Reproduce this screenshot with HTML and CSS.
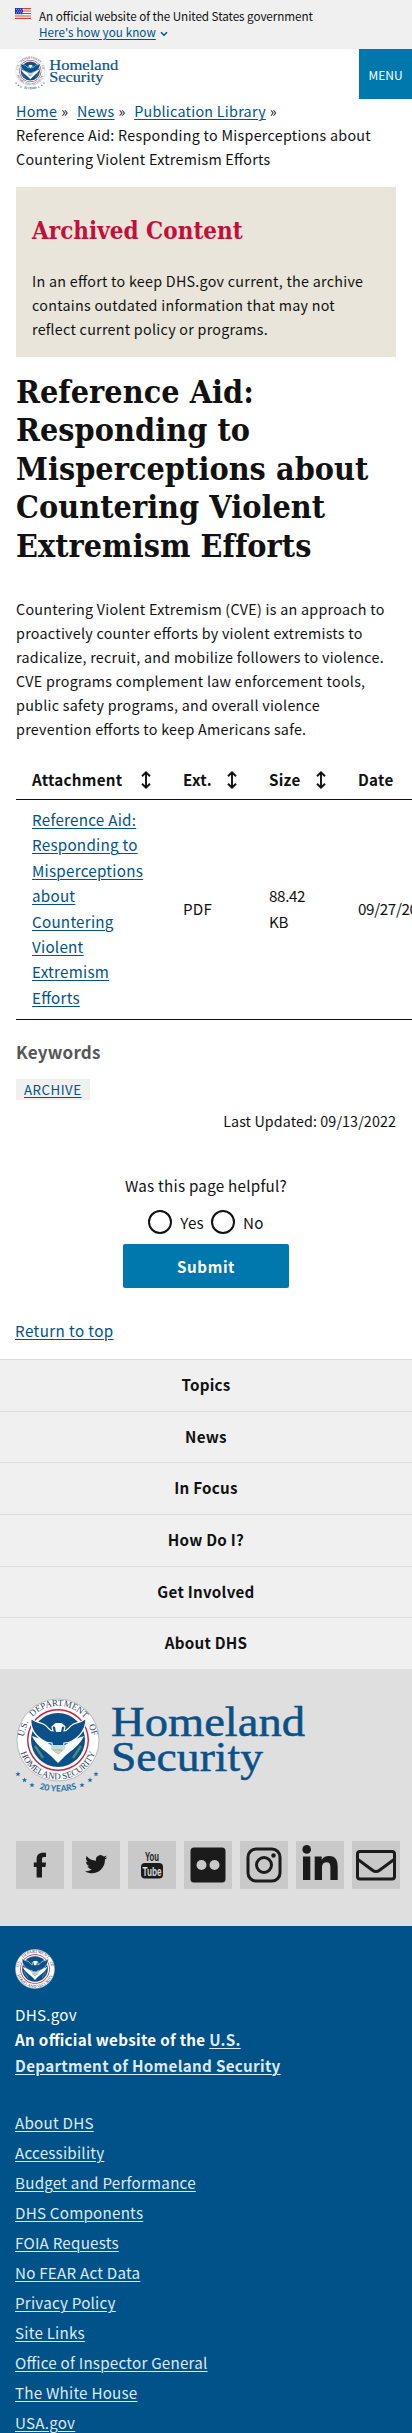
FILE: index.html
```html
<!DOCTYPE html>
<html lang="en">
<head>
<meta charset="utf-8">
<title>Reference Aid: Responding to Misperceptions about Countering Violent Extremism Efforts | Homeland Security</title>
<link rel="stylesheet" href="styles.css">
</head>
<body>
<svg class="defs" width="0" height="0" aria-hidden="true">
  <defs>
    <path id="arc-dept" d="M8.8 42 A34.2 34.2 0 0 1 77.2 42"/>
    <path id="arc-bottom" d="M3.6 42 A39.4 39.4 0 0 0 82.4 42"/>
    <path id="arc-years" d="M17 88 Q43 99 69 88"/>
    <g id="eagle">
      <circle cx="43" cy="42" r="31" fill="#c8213f"/>
      <circle cx="43" cy="42" r="29.6" fill="#fff"/>
      <circle cx="43" cy="42" r="27" fill="#0a5189"/>
      <path fill="#fff" d="M17 38c4 9 12 14 19 20l7 7 7-7c7-6 15-11 19-20l-9 3-10 6H36l-10-6z"/>
      <path fill="#0a5189" stroke="#fff" stroke-width="1.2" d="M16 20c4 5 10 4 14 7 3 2 4 6 8 6l-1-4 3-3h7l3 3-1 4c4 0 5-4 8-6 4-3 10-2 14-7 0 10-5 18-14 23-3 2-5 2-8 2l-1 8-5 4-5-4-1-8c-3 0-5 0-8-2-9-5-14-13-13-23z"/>
      <path fill="#fff" d="M38 28l3-3h5l4 3-3 1-1 5h-5l-1-5z"/>
      <path fill="#bcdcec" d="M36 47h14v4l-7 5-7-5z"/>
      <path stroke="#4d8b74" stroke-width="2.4" fill="none" d="M20 48l8 12M66 48l-8 12"/>
      <path stroke="#d9ba65" stroke-width="1.6" d="M38 52h9"/>
    </g>
    <g id="seal">
      <circle cx="43" cy="42" r="41" fill="#fff" stroke="#b7bbc0" stroke-width="1"/>
      <use href="#eagle"/>
      <g class="seal-text">
        <text><textPath href="#arc-dept" startOffset="51%" text-anchor="middle">DEPARTMENT</textPath></text>
        <text transform="rotate(-72 43 42)" x="43" y="8" text-anchor="middle">U.S.</text>
        <text transform="rotate(74 43 42)" x="43" y="8" text-anchor="middle">OF</text>
        <text><textPath href="#arc-bottom" startOffset="50%" text-anchor="middle">HOMELAND SECURITY</textPath></text>
      </g>
    </g>
    <path id="star" d="M0-2.6.7-.8 2.6-.8 1.1.4 1.7 2.3 0 1.2-1.7 2.3-1.1.4-2.6-.8-.7-.8z"/>
    <g id="stars" fill="#1c6da3">
      <use href="#star" x="3" y="76"/><use href="#star" x="9.5" y="82"/><use href="#star" x="17" y="87"/>
      <use href="#star" x="81" y="76"/><use href="#star" x="75" y="82"/><use href="#star" x="67" y="87"/>
    </g>
    <symbol id="logo" viewBox="0 0 292 98">
      <use href="#seal"/>
      <use href="#stars"/>
      <text class="years"><textPath href="#arc-years" startOffset="50%" text-anchor="middle">20 YEARS</textPath></text>
      <text class="wordmark" x="96" y="38" textLength="194" lengthAdjust="spacingAndGlyphs">Homeland</text>
      <text class="wordmark" x="96" y="73" textLength="152" lengthAdjust="spacingAndGlyphs">Security</text>
    </symbol>
    <symbol id="sort" viewBox="0 0 10 18"><path d="M5 1.5v15M1 5.2 5 1.3l4 3.9M1 12.8l4 3.9 4-3.9" fill="none" stroke="#111" stroke-width="1.9"/></symbol>
  </defs>
</svg>

<section class="banner">
  <svg class="flag" viewBox="0 0 16 11"><path fill="#fff" d="M0 0h16v11H0z"/><path stroke="#d8402f" stroke-width="1.1" d="M0 .6h16M0 3h16M0 5.5h16M0 8h16M0 10.4h16"/><path fill="#1e33b1" d="M0 0h8v6.2H0z"/><path stroke="#fff" stroke-width=".8" stroke-dasharray=".8 1.2" d="M1 1.3h7M2 3.1h6M1 4.9h7"/></svg>
  <div>
    <p class="banner-text">An official website of the United States government</p>
    <p class="banner-text know"><a class="link" href="#">Here's how you know</a><svg class="chevron" viewBox="0 0 8 6"><path d="M1 1.2l3 3 3-3" fill="none" stroke="#005288" stroke-width="1.5"/></svg></p>
  </div>
</section>

<header class="header">
  <svg class="header-logo"><use href="#logo"/></svg>
  <button class="menu">MENU</button>
</header>

<main class="main">
  <nav class="crumbs body-text">
    <a class="link" href="#">Home</a><span class="sep">»</span><a class="link" href="#">News</a><span class="sep">»</span><a class="link" href="#">Publication Library</a><span class="sep">»</span>
    <div>Reference Aid: Responding to Misperceptions about<br>Countering Violent Extremism Efforts</div>
  </nav>

  <section class="archived">
    <h2 class="archived-title">Archived Content</h2>
    <p class="body-text">In an effort to keep DHS.gov current, the archive<br>contains outdated information that may not<br>reflect current policy or programs.</p>
  </section>

  <h1 class="title">Reference Aid:<br>Responding to<br>Misperceptions about<br>Countering Violent<br>Extremism Efforts</h1>

  <p class="body-text">Countering Violent Extremism (CVE) is an approach to<br>proactively counter efforts by violent extremists to<br>radicalize, recruit, and mobilize followers to violence.<br>CVE programs complement law enforcement tools,<br>public safety programs, and overall violence<br>prevention efforts to keep Americans safe.</p>

  <div class="table-wrap">
    <div class="row head">
      <div class="cell">Attachment<svg class="sort wide"><use href="#sort"/></svg></div>
      <div class="cell">Ext.<svg class="sort"><use href="#sort"/></svg></div>
      <div class="cell">Size<svg class="sort"><use href="#sort"/></svg></div>
      <div class="cell">Date</div>
    </div>
    <div class="row data">
      <div class="cell"><a class="link" href="#">Reference Aid:<br>Responding to<br>Misperceptions<br>about<br>Countering<br>Violent<br>Extremism<br>Efforts</a></div>
      <div class="cell">PDF</div>
      <div class="cell num">88.42<br>KB</div>
      <div class="cell num">09/27/2018</div>
    </div>
  </div>

  <h3 class="keywords">Keywords</h3>
  <div class="tags"><a class="tag link" href="#">ARCHIVE</a></div>
  <p class="updated body-text">Last Updated: 09/13/2022</p>

  <form class="survey">
    <p>Was this page helpful?</p>
    <div class="options">
      <label class="option"><span class="radio"></span>Yes</label>
      <label class="option"><span class="radio"></span>No</label>
    </div>
    <button class="submit" type="button">Submit</button>
  </form>

  <a class="top link" href="#">Return to top</a>
</main>

<footer>
  <nav class="footer-nav">
    <a href="#">Topics</a><a href="#">News</a><a href="#">In Focus</a><a href="#">How Do I?</a><a href="#">Get Involved</a><a href="#">About DHS</a>
  </nav>
  <section class="social">
    <svg class="footer-logo"><use href="#logo"/></svg>
    <div class="tiles">
      <a class="tile" href="#"><svg viewBox="0 0 48 48"><path d="M20.6 36.5V26h-2.8v-4.6h2.8v-3.1c0-4.4 2.2-6.6 6.4-6.6h3v4.4h-2c-1.6 0-2 .8-2 2.1v3.2h4l-.5 4.6H26v10.5z"/></svg></a>
      <a class="tile" href="#"><svg viewBox="0 0 48 48"><path d="M35.3 16.2c-.8.4-1.7.6-2.6.7.9-.6 1.6-1.4 2-2.5-.9.5-1.8.9-2.9 1.1a4.6 4.6 0 0 0-7.8 4.2c-3.8-.2-7.1-2-9.4-4.8-1.2 2.1-.6 4.8 1.4 6.1-.8 0-1.4-.2-2.1-.6 0 2.2 1.6 4.1 3.7 4.6-.7.2-1.4.2-2.1.1.6 1.8 2.3 3.1 4.3 3.2a9.2 9.2 0 0 1-6.8 1.9c8.5 5.4 20-.2 20-11.7.9-.6 1.7-1.4 2.3-2.3z"/></svg></a>
      <a class="tile" href="#"><svg viewBox="0 0 48 48"><rect x="13" y="22" width="22" height="15.5" rx="4"/><text class="yt" x="24" y="20" text-anchor="middle" textLength="14" lengthAdjust="spacingAndGlyphs">You</text><text class="yt light" x="24" y="34.5" text-anchor="middle" textLength="19" lengthAdjust="spacingAndGlyphs">Tube</text></svg></a>
      <a class="tile" href="#"><svg viewBox="0 0 48 48"><rect x="6.5" y="6.5" width="35" height="35" rx="3.5"/><circle class="hole" cx="17.5" cy="24" r="5"/><circle class="hole" cx="30.5" cy="24" r="5"/></svg></a>
      <a class="tile" href="#"><svg viewBox="0 0 48 48"><g class="stroke"><rect x="8" y="8" width="32" height="32" rx="8"/><circle cx="24" cy="24" r="7.5"/></g><circle cx="33.5" cy="14.5" r="2.2"/></svg></a>
      <a class="tile" href="#"><svg viewBox="0 0 48 48"><circle cx="10.7" cy="8.4" r="4.3"/><path d="M7 15.500h7.300V39H7zM18.700 15.500h7v3.200c1.200-2.200 3.800-3.800 7.200-3.800 7.400 0 8.800 4.900 8.800 11.200V39h-7.300V27.500c0-2.700 0-6.200-3.800-6.200s-4.600 3-4.600 6V39h-7.300z"/></svg></a>
      <a class="tile" href="#"><svg viewBox="0 0 48 48"><g class="stroke"><rect x="5.5" y="10.5" width="37" height="27.5" rx="2.5"/><path d="M6 18.5l14.5 10.7q3.500 2.500 7 0L42 18.500"/></g></svg></a>
    </div>
  </section>
  <section class="identifier">
    <svg class="id-seal" viewBox="1 0 84 84"><use href="#seal"/></svg>
    <p>DHS.gov</p>
    <p class="strong">An official website of the <a href="#">U.S.<br>Department of Homeland Security</a></p>
    <ul class="links">
      <li><a href="#">About DHS</a></li>
      <li><a href="#">Accessibility</a></li>
      <li><a href="#">Budget and Performance</a></li>
      <li><a href="#">DHS Components</a></li>
      <li><a href="#">FOIA Requests</a></li>
      <li><a href="#">No FEAR Act Data</a></li>
      <li><a href="#">Privacy Policy</a></li>
      <li><a href="#">Site Links</a></li>
      <li><a href="#">Office of Inspector General</a></li>
      <li><a href="#">The White House</a></li>
      <li><a href="#">USA.gov</a></li>
    </ul>
  </section>
</footer>
</body>
</html>
```

FILE: styles.css
```css
* { box-sizing: border-box; margin: 0; padding: 0; }
html { overflow: hidden; }
body {
  width: 412px;
  height: 2433px;
  overflow: hidden;
  background: #fff;
  color: #111;
  font-family: "Noto Sans CJK SC", "Open Sans", sans-serif;
  font-size: 15.2px;
  line-height: 25.4px;
  letter-spacing: .25px;
  font-feature-settings: "liga" 1;
}
svg { letter-spacing: 0; }
.defs { display: block; }
.link { color: #005288; text-decoration: underline; text-underline-offset: 2px; text-decoration-thickness: 1px; }
.body-text { font-size: 14.3px; line-height: 24px; letter-spacing: .27px; }

.banner { display: flex; height: 49px; padding: 8px 15px; background: #f0f0f0; gap: 8px; }
.flag { width: 16px; height: 11px; }
.banner-text { font-size: 11.7px; line-height: 16px; letter-spacing: -.07px; }
.know { letter-spacing: .05px; }
.chevron { width: 8px; height: 6px; margin-left: 4px; }

.header { display: flex; justify-content: space-between; height: 50px; }
.header-logo { width: 104px; height: 35px; margin: 7px 0 0 15px; }
.menu { width: 53px; height: 50px; border: 0; background: #0078ae; color: #fff; font: 12px "Noto Sans CJK SC", sans-serif; }

.main { height: 1260px; padding: 0 16px; }
.crumbs { height: 88px; }
.sep { margin: 0 8.5px 0 4px; }
.archived { height: 170px; padding: 29px 16px 0; background: #e9e5da; }
.archived-title { height: 53px; color: #c41039; font: bold 24px/30px "DejaVu Serif Condensed", "DejaVu Serif", serif; font-stretch: condensed; letter-spacing: 0; }
.title { padding-top: 16px; height: 240px; font: bold 32px/38.4px "DejaVu Serif Condensed", "DejaVu Serif", serif; font-stretch: condensed; letter-spacing: .05px; }

.table-wrap { margin: 18px -16px 0 0; overflow: hidden; }
.row { display: grid; grid-template-columns: 151px 86px 89px 120px; padding-left: 16px; border-bottom: 1px solid #111; }
.cell { display: flex; align-items: center; }
.head { height: 41px; padding-top: 1px; font-weight: 700; }
.sort { width: 10px; height: 18px; margin-left: 15px; }
.wide { margin-left: 19px; }
.data { height: 220px; padding-bottom: 2px; }
.num { letter-spacing: -.35px; }

.keywords { margin-top: 19px; color: #565656; font-size: 17px; line-height: 26px; }
.tags { height: 21px; margin-top: 14px; display: flex; }
.tag { padding: 0 8px; background: #f0f0f0; font-size: 13.3px; line-height: 21px; letter-spacing: .5px; }
.updated { margin-top: 9px; text-align: right; letter-spacing: .1px; }
.survey { display: flex; flex-direction: column; align-items: center; margin-top: 40px; }
.options { display: flex; gap: 7px; margin-top: 12px; }
.option { display: flex; align-items: center; gap: 8px; height: 24px; }
.radio { width: 24px; height: 24px; border: 2px solid #111; border-radius: 50%; }
.submit { width: 166px; height: 44px; margin-top: 10px; border: 0; border-radius: 2px; background: #0078ae; color: #fff; font: bold 15.2px "Noto Sans CJK SC", sans-serif; letter-spacing: .6px; }
.top { display: inline-block; margin: 30px 0 0 -1px; letter-spacing: .4px; }

.footer-nav { display: grid; grid-template-rows: repeat(6, 1fr); height: 310px; background: #f0f0f0; }
.footer-nav a { display: flex; align-items: center; justify-content: center; padding-bottom: 1px; border-top: 1px solid #dcdcdc; color: #111; font-weight: 700; text-decoration: none; }
.social { height: 257px; padding: 29px 15px 0; background: #dfdfdf; }
.footer-logo { display: block; width: 292px; height: 98px; }
.tiles { display: flex; gap: 8px; margin: 45px 0 0 1px; }
.tile { flex: none; width: 48px; height: 48px; background: #c9c9c9; }
.tile svg { display: block; fill: #1b1b1b; }
.tile .hole { fill: #c9c9c9; }
.tile .stroke { fill: none; stroke: #1b1b1b; stroke-width: 3; }
.yt { font: bold 12.5px "Liberation Sans", sans-serif; }
.light { fill: #dcdcdc; }

.wordmark { fill: #0a5189; font: 43px "Liberation Serif", serif; stroke: #0a5189; stroke-width: .5; }
.years { fill: #1c6da3; font: bold 8.5px Lato, sans-serif; }
.seal-text { fill: #2b3c5c; font: 9px "Liberation Serif", serif; }

.identifier { height: 507px; padding: 23px 15px 0; background: #005288; color: #fff; }
.id-seal { display: block; width: 40px; height: 40px; margin-bottom: 13px; }
.identifier a { color: #dfe9f2; text-decoration: underline; text-underline-offset: 2px; text-decoration-thickness: 1px; }
.strong { font-weight: 700; letter-spacing: .3px; }
.links { margin-top: 29px; list-style: none; line-height: 30px; letter-spacing: .22px; }
```
